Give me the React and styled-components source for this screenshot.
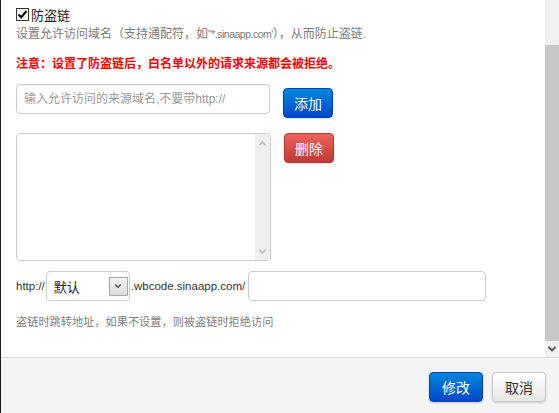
import styled, { createGlobalStyle } from "styled-components";

const GlobalStyle = createGlobalStyle`
  html, body {
    margin: 0;
    padding: 0;
    background: #fff;
  }
  body {
    font-family: "Liberation Sans", "Noto Sans CJK SC", sans-serif;
    color: #333;
  }
`;

const Chevron = ({ dir = "down", color = "#666", size = 9 }) => (
  <svg width={size} height={size} viewBox="0 0 10 10">
    <path
      d={dir === "down" ? "M1.5 3 L5 6.5 L8.5 3" : "M1.5 7 L5 3.5 L8.5 7"}
      fill="none"
      stroke={color}
      strokeWidth="1.8"
    />
  </svg>
);

const App = () => {
  return (
    <Dialog>
      <GlobalStyle />
      <Body>
        <Content>
          <CheckRow>
            <CheckBox>
              <svg width="11" height="11" viewBox="0 0 11 11">
                <path d="M1.5 5.5 L4.2 8.3 L9.5 2" fill="none" stroke="#111" strokeWidth="2.2" />
              </svg>
            </CheckBox>
            <span>防盗链</span>
          </CheckRow>
          <Desc>
            设置允许访问域名（支持通配符，如<Latin>"*.sinaapp.com'</Latin>），从而防止盗链<Latin>.</Latin>
          </Desc>
          <Warning>注意：设置了防盗链后，白名单以外的请求来源都会被拒绝。</Warning>

          <FormRow>
            <TextInput placeholder="输入允许访问的来源域名,不要带http://" />
            <Btn $variant="primary" $offset={4}>添加</Btn>
          </FormRow>

          <FormRow $gap={13}>
            <ListBox>
              <ListArea />
              <ListScroll>
                <Chevron dir="up" color="#bbb" />
                <Chevron dir="down" color="#bbb" />
              </ListScroll>
            </ListBox>
            <Btn $variant="danger">删除</Btn>
          </FormRow>

          <DomainRow>
            <span>http://</span>
            <Select>
              <span>默认</span>
              <SelectArrow>
                <Chevron color="#555" size={8} />
              </SelectArrow>
            </Select>
            <span>.wbcode.sinaapp.com/</span>
            <PathInput />
          </DomainRow>
          <Hint>盗链时跳转地址，如果不设置，则被盗链时拒绝访问</Hint>
        </Content>
        <Scrollbar>
          <Track />
          <Thumb />
          <ScrollButton>
            <Chevron color="#555" size={10} />
          </ScrollButton>
        </Scrollbar>
      </Body>
      <Footer>
        <Btn $variant="primary" $wide>修改</Btn>
        <Btn $variant="default" $wide>取消</Btn>
      </Footer>
    </Dialog>
  );
};

const Dialog = styled.div`
  width: 559px;
  height: 413px;
  box-sizing: border-box;
  border-left: 1px solid #1a1a1a;
  display: flex;
  flex-direction: column;
  overflow: hidden;
`;

const Body = styled.div`
  height: 357px;
  flex-shrink: 0;
  display: flex;
`;

const Content = styled.div`
  flex: 1;
  padding: 6px 0 0 15px;
  font-size: 12px;
`;

const CheckRow = styled.div`
  display: flex;
  align-items: center;
  gap: 2px;
  height: 16px;
  font-size: 13px;
  color: #222;
`;

const CheckBox = styled.span`
  width: 11px;
  height: 11px;
  border: 1px solid #333;
  display: flex;
  align-items: center;
  justify-content: center;
  background: #fff;
`;

const Desc = styled.div`
  margin-top: 3px;
  line-height: 18px;
  color: #7a7a7a;
`;

const Latin = styled.span`
  font-size: 10.5px;
  letter-spacing: -0.5px;
`;

const Warning = styled.div`
  margin-top: 12px;
  line-height: 18px;
  color: #f00;
  font-weight: bold;
`;

const FormRow = styled.div`
  display: flex;
  align-items: flex-start;
  gap: ${(p) => p.$gap || 13}px;
  margin-top: ${(p) => (p.$gap ? 15 : 11)}px;
`;

const TextInput = styled.input`
  width: 254px;
  height: 30px;
  box-sizing: border-box;
  border: 1px solid #ccc;
  border-radius: 4px;
  padding: 0 7px;
  font: 12px "Liberation Sans", "Noto Sans CJK SC", sans-serif;
  outline: none;
  box-shadow: inset 0 1px 1px rgba(0, 0, 0, 0.06);
  &::placeholder {
    color: #999;
  }
`;

const Btn = styled.button`
  margin-top: ${(p) => p.$offset || 0}px;
  height: 30px;
  width: ${(p) => (p.$wide ? 54 : 50)}px;
  padding: 0;
  border-radius: 4px;
  font: 14px "Liberation Sans", "Noto Sans CJK SC", sans-serif;
  cursor: pointer;
  border: 1px solid
    ${(p) =>
      p.$variant === "primary" ? "#0044aa" : p.$variant === "danger" ? "#b7372f" : "#c8c8c8"};
  color: ${(p) => (p.$variant === "default" ? "#333" : "#fff")};
  background: ${(p) =>
    p.$variant === "primary"
      ? "linear-gradient(#0088dd, #0047cc)"
      : p.$variant === "danger"
      ? "linear-gradient(#ee625d, #c13a33)"
      : "linear-gradient(#ffffff, #e8e8e8)"};
  box-shadow: 0 1px 2px rgba(0, 0, 0, 0.15);
`;

const ListBox = styled.div`
  width: 255px;
  height: 128px;
  box-sizing: border-box;
  border: 1px solid #ccc;
  border-radius: 4px;
  display: flex;
  overflow: hidden;
`;

const ListArea = styled.div`
  flex: 1;
`;

const ListScroll = styled.div`
  width: 15px;
  background: #efefef;
  display: flex;
  flex-direction: column;
  align-items: center;
  justify-content: space-between;
  padding: 5px 0 4px;
`;

const DomainRow = styled.div`
  display: flex;
  align-items: center;
  gap: 1px;
  margin-top: 10px;
  color: #333;
  font-size: 11.5px;
`;

const Select = styled.div`
  width: 84px;
  height: 30px;
  box-sizing: border-box;
  border: 1px solid #ccc;
  border-radius: 4px;
  display: flex;
  align-items: center;
  justify-content: space-between;
  padding: 0 0 0 7px;
  font-size: 13px;
  color: #222;
`;

const SelectArrow = styled.span`
  width: 19px;
  height: 19px;
  box-sizing: border-box;
  border: 1px solid #a8a8a8;
  background: linear-gradient(#f4f4f4, #dcdcdc);
  margin-right: 1px;
  display: flex;
  align-items: center;
  justify-content: center;
`;

const PathInput = styled.input`
  width: 238px;
  height: 30px;
  box-sizing: border-box;
  border: 1px solid #ccc;
  border-radius: 4px;
  margin-left: 2px;
  outline: none;
`;

const Hint = styled.div`
  margin-top: 12px;
  line-height: 18px;
  font-size: 11.2px;
  color: #808080;
`;

const Scrollbar = styled.div`
  width: 14px;
  display: flex;
  flex-direction: column;
  background: #f0f0f0;
`;

const Track = styled.div`
  height: 45px;
`;

const Thumb = styled.div`
  flex: 1;
  background: #c8c8c8;
`;

const ScrollButton = styled.div`
  height: 16px;
  display: flex;
  align-items: center;
  justify-content: center;
`;

const Footer = styled.div`
  flex: 1;
  border-top: 1px solid #dadada;
  background: #f4f4f4;
  display: flex;
  justify-content: flex-end;
  align-items: flex-start;
  gap: 9px;
  padding: 14px 13px 0 0;
`;

export default App;
